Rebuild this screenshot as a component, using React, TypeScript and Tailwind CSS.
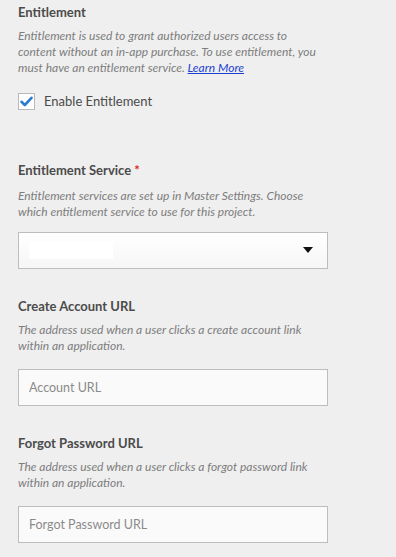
export default function App() {
    return (
        <div className="min-h-[557px] w-[396px] bg-[#efefef] px-[18px] pt-[4px] text-[#4b4b4b] [font-family:Lato,'Open_Sans',sans-serif]">
            <section>
                <h2 className="text-[13px] font-bold leading-[16px]">Entitlement</h2>
                <p className="mt-[8px] w-[305px] text-[12px] italic leading-[16px] text-[#7d7d7d]">
                    Entitlement is used to grant authorized users access to content without an in-app purchase. To use entitlement, you must have an entitlement service.{" "}
                    <a href="#" className="text-[#1a3fd1] underline">Learn More</a>
                </p>
                <label className="mt-[16px] flex items-center gap-[9px] text-[13px]">
                    <span className="flex h-[17px] w-[17px] items-center justify-center border border-[#b9b9b9] bg-white">
                        <svg width="13" height="11" viewBox="0 0 13 11">
                            <path d="M1.5 5.8 L4.8 9 L11.5 1.8" fill="none" stroke="#2b7bd0" strokeWidth="2.6" strokeLinecap="round" strokeLinejoin="round" />
                        </svg>
                    </span>
                    Enable Entitlement
                </label>
            </section>

            <section className="mt-[50px]">
                <h2 className="text-[13px] font-bold leading-[16px]">
                    Entitlement Service <span className="text-[#e0261a]">*</span>
                </h2>
                <p className="mt-[10px] w-[305px] text-[12px] italic leading-[16px] text-[#7d7d7d]">
                    Entitlement services are set up in Master Settings. Choose which entitlement service to use for this project.
                </p>
                <div className="mt-[12px] flex h-[37px] w-[310px] items-center justify-between border border-[#bdbdbd] bg-gradient-to-b from-white to-[#f6f6f6] pl-[10px] pr-[14px]">
                    <span className="h-[17px] w-[84px] bg-white" />
                    <svg width="10" height="6" viewBox="0 0 10 6">
                        <path d="M0 0 H10 L5 6 Z" fill="#111" />
                    </svg>
                </div>
            </section>

            <Field title="Create Account URL" text="The address used when a user clicks a create account link within an application." placeholder="Account URL" />
            <Field title="Forgot Password URL" text="The address used when a user clicks a forgot password link within an application." placeholder="Forgot Password URL" />
        </div>
    )
}

function Field({ title, text, placeholder }: { title: string; text: string; placeholder: string }) {
    return (
        <section className="mt-[29px]">
            <h2 className="text-[13px] font-bold leading-[16px]">{title}</h2>
            <p className="mt-[8px] w-[305px] text-[12px] italic leading-[16px] text-[#7d7d7d]">{text}</p>
            <input
                placeholder={placeholder}
                className="mt-[15px] block h-[37px] w-[310px] border border-[#bdbdbd] bg-[#fafafa] px-[10px] text-[12.5px] text-[#4b4b4b] outline-none placeholder:text-[#8a8a8a]"
            />
        </section>
    )
}
